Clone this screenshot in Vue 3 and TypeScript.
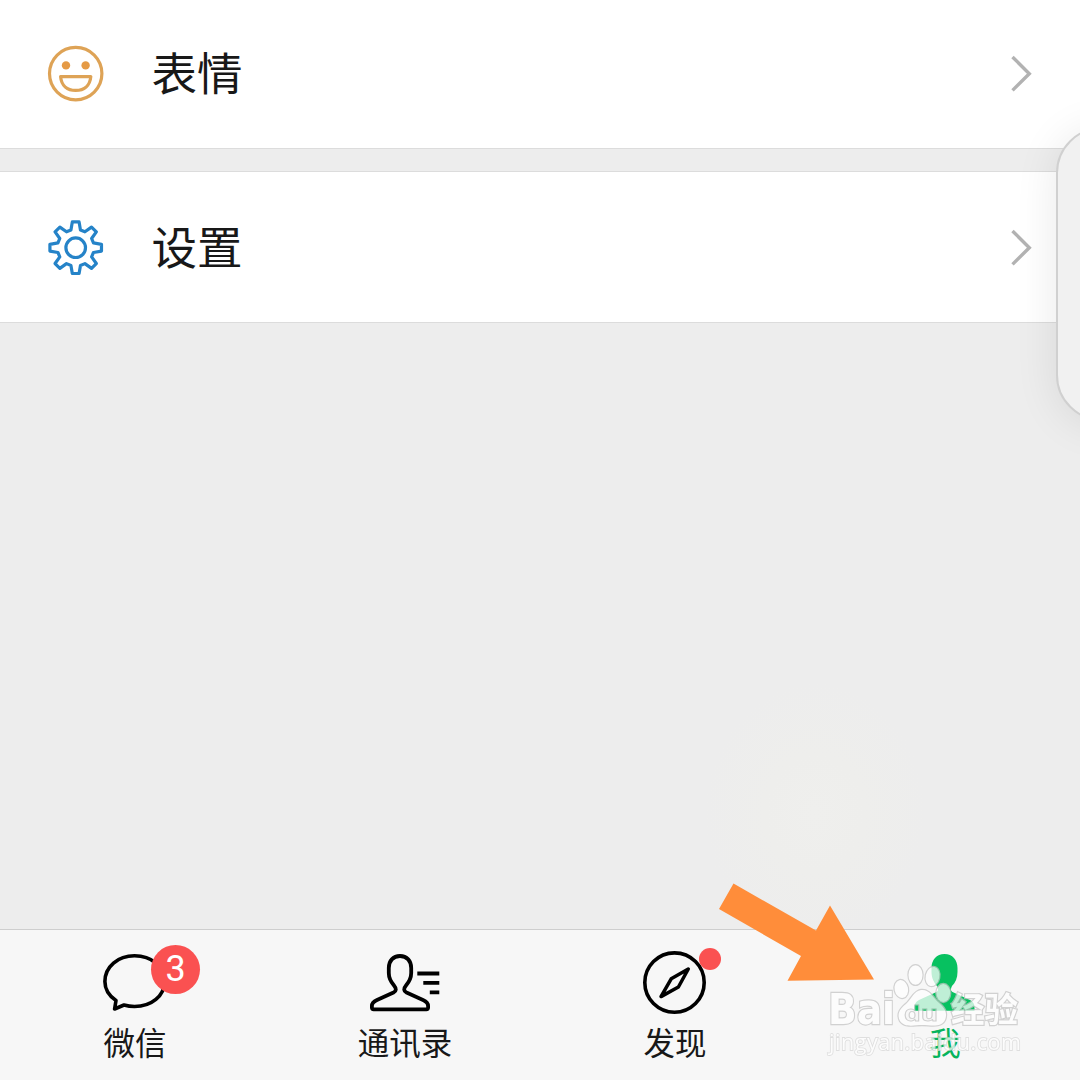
<script setup lang="ts">
interface MenuRow {
  id: 'sticker' | 'settings'
  label: string
}

interface Tab {
  id: 'chats' | 'contacts' | 'discover' | 'me'
  label: string
  active?: boolean
}

const rows: MenuRow[] = [
  { id: 'sticker', label: '表情' },
  { id: 'settings', label: '设置' },
]

const tabs: Tab[] = [
  { id: 'chats', label: '微信' },
  { id: 'contacts', label: '通讯录' },
  { id: 'discover', label: '发现' },
  { id: 'me', label: '我', active: true },
]

// Eight-toothed gear outline: each tooth is base, tip, tip, base.
function gearPath(teeth: number, outer: number, inner: number): string {
  const step = 360 / teeth
  const points: string[] = []
  for (let i = 0; i < teeth; i++) {
    const corners: [number, number][] = [
      [-15, inner],
      [-7.5, outer],
      [7.5, outer],
      [15, inner],
    ]
    for (const [offset, radius] of corners) {
      const a = ((i * step + offset - 90) * Math.PI) / 180
      points.push(`${(30 + radius * Math.cos(a)).toFixed(2)} ${(30 + radius * Math.sin(a)).toFixed(2)}`)
    }
  }
  return `M${points.join('L')}Z`
}

const gear = gearPath(8, 26, 18.4)
</script>

<template>
  <main class="screen">
    <section class="menu">
      <div v-for="row in rows" :key="row.id" class="row" :class="row.id">
        <svg v-if="row.id === 'sticker'" class="row-icon" viewBox="0 0 60 60" fill="none" stroke="#dea356" stroke-width="3.2">
          <circle cx="29.7" cy="29.6" r="26.2" />
          <circle cx="20" cy="21.4" r="4.2" fill="#e59a45" stroke="none" />
          <circle cx="39.6" cy="21.4" r="4.2" fill="#e59a45" stroke="none" />
          <path d="M14.6 32.600H44.800C44 41.800 38 46.400 29.700 46.400S15.400 41.800 14.600 32.600Z" stroke-linejoin="round" />
        </svg>
        <svg v-else class="row-icon" viewBox="0.3 -0.7 60 60" fill="none" stroke="#2583c8" stroke-width="3.2" stroke-linejoin="round">
          <path :d="gear" />
          <circle cx="30" cy="30" r="9.800" />
        </svg>
        <span class="row-label">{{ row.label }}</span>
        <svg class="chevron" viewBox="0 0 24 40" fill="none" stroke="#b2b2b2" stroke-width="3.4">
          <path d="M2.500 3L19.300 19.700L2.500 36.400" />
        </svg>
      </div>
    </section>

    <div class="blank"></div>

    <nav class="tabbar">
      <div v-for="tab in tabs" :key="tab.id" class="tab" :class="{ active: tab.active }">
        <div class="tab-icon">
          <svg v-if="tab.id === 'chats'" viewBox="75 940 120 76" fill="none" stroke="#000" stroke-width="3.6">
            <path d="M116 1000.500C108.500 995.500 104.900 989 104.900 981.500C104.900 966.500 118 955.800 134.500 955.800C151.500 955.800 164.500 966.500 164.500 981.500C164.500 996 151.500 1006.500 134.500 1006.500C130.800 1006.500 127.500 1006 124 1005L114.600 1009Z" stroke-linejoin="round" />
          </svg>
          <svg v-else-if="tab.id === 'contacts'" viewBox="345 940 120 76" fill="none" stroke="#000" stroke-width="3.800">
            <path d="M400 956C393 956 388.800 961 388.800 968V973C388.800 979 391 982 394 985.500C396.500 988.500 396.500 991 393.500 992.500L377 1000C373.500 1001.500 371.900 1003.500 371.900 1006V1007.500Q371.900 1009.300 373.700 1009.300H426.300Q428.100 1009.300 428.100 1007.500V1006C428.100 1003.500 426.500 1001.500 423 1000L406.500 992.500C403.500 991 403.500 988.500 406 985.500C409 982 411.200 979 411.200 973V968C411.200 961 407 956 400 956Z" stroke-linejoin="round" />
            <path d="M417.300 973.500H439.300M423.300 982.800H439.300M429.800 992.300H439.300" />
          </svg>
          <svg v-else-if="tab.id === 'discover'" viewBox="615 940 120 76" fill="none" stroke="#000" stroke-width="3.600">
            <circle cx="674.500" cy="982.600" r="29.700" />
            <path d="M688.300 969L671.200 978.800L661 996.600L678.400 987Z" stroke-width="3.500" stroke-linejoin="round" />
          </svg>
          <svg v-else viewBox="885 940 120 76" fill="#07c160">
            <path d="M944.500 954C936.500 954 931.500 960 931.500 968V972C931.500 978 934 982.500 937 986C938.500 989 938.500 991 936.500 992L919 1000C915.500 1002 914.500 1004 914.500 1007V1010.700H974.500V1007C974.500 1004 973.500 1002 970 1000L952.500 992C950.500 991 950.500 989 952 986C955.500 982.500 957.500 978 957.500 972V968C957.500 960 952.500 954 944.500 954Z" />
          </svg>
          <span v-if="tab.id === 'chats'" class="badge">3</span>
          <span v-if="tab.id === 'discover'" class="dot"></span>
        </div>
        <span class="tab-label">{{ tab.label }}</span>
      </div>
    </nav>

    <aside class="edge-panel"></aside>

    <svg class="pointer" viewBox="0 0 160 104">
      <path d="M15.500 1.500L98 48.500L112 23.500L156 97.500L69.500 98.700L83 74L1 27Z" fill="#ff8d3a" />
    </svg>

    <svg class="watermark" viewBox="820 955 210 110">
      <mask id="pad-cut" maskUnits="userSpaceOnUse" x="890" y="980" width="65" height="55">
        <rect x="890" y="980" width="65" height="55" fill="#fff" />
        <text x="904" y="1020.500" class="du" fill="#000" textLength="34" lengthAdjust="spacingAndGlyphs">du</text>
      </mask>
      <g class="mark">
        <text x="828" y="1024" class="bai" textLength="67" lengthAdjust="spacingAndGlyphs">Bai</text>
        <ellipse cx="901.300" cy="989" rx="6.700" ry="9" transform="rotate(-12 901.300 989)" />
        <ellipse cx="915.500" cy="975" rx="7" ry="9.800" />
        <ellipse cx="932.500" cy="976.500" rx="6.800" ry="9.600" transform="rotate(12 932.500 976.500)" />
        <ellipse cx="943.300" cy="993" rx="6.900" ry="9" />
        <path mask="url(#pad-cut)" d="M921 990C929 989 933 997 938 1002C944 1007 948 1012 945 1020C941 1028 931 1025 922 1025C914 1025 905 1028 900 1021C896 1013 901 1008 907 1003C912 998 914 991 921 990Z" />
        <text x="904" y="1020.500" class="du du-edge" textLength="34" lengthAdjust="spacingAndGlyphs">du</text>
        <text x="951" y="1021.500" class="cjk" textLength="67" lengthAdjust="spacingAndGlyphs">经验</text>
        <text x="829" y="1050" class="url" textLength="192" lengthAdjust="spacing">jingyan.baidu.com</text>
      </g>
    </svg>
  </main>
</template>

<style>
body {
  background: #ededed;
}
</style>

<style scoped>
.screen {
  position: relative;
  display: flex;
  flex-direction: column;
  width: 1080px;
  height: 1080px;
  overflow: hidden;
  background: #ededed;
  color: #181818;
  font-family: "Noto Sans CJK SC", sans-serif;
}

.menu {
  display: flex;
  flex-direction: column;
  gap: 22px;
}

.row {
  box-sizing: border-box;
  display: flex;
  align-items: center;
  height: 149px;
  padding: 0 46px;
  background: #fff;
  border-bottom: 1px solid #dcdcdc;
}

.row.settings {
  height: 152px;
  border-top: 1px solid #dcdcdc;
}

.row-icon {
  width: 60px;
  height: 60px;
}

.row-label {
  flex: 1;
  margin-left: 45.5px;
  padding-bottom: 6px;
  font-size: 45.5px;
  line-height: 60px;
}

.settings .row-label {
  padding-bottom: 4px;
}

.chevron {
  width: 24px;
  height: 40px;
}

.settings .chevron {
  margin-top: 1px;
}

.blank {
  flex: 1;
  background: radial-gradient(ellipse 110px 130px at 815px 490px, #efefed 0%, #eeeeec 45%, #ededed 100%);
}

.tabbar {
  display: grid;
  grid-template-columns: repeat(4, 1fr);
  height: 150px;
  border-top: 1px solid #cecece;
  background: #f7f7f7;
}

.tab {
  display: flex;
  flex-direction: column;
  align-items: center;
  padding-top: 10px;
}

.tab-icon {
  position: relative;
  width: 120px;
  height: 76px;
}

.tab-icon svg {
  display: block;
  width: 120px;
  height: 76px;
}

.tab-label {
  margin-top: 5px;
  font-size: 31.5px;
  line-height: 40px;
}

.tab.active .tab-label {
  color: #07b45c;
}

.badge {
  position: absolute;
  top: 5px;
  left: 76px;
  width: 49px;
  height: 49px;
  border-radius: 50%;
  background: #fa5151;
  color: #fff;
  font-family: Roboto, sans-serif;
  font-size: 36px;
  line-height: 49px;
  text-align: center;
}

.dot {
  position: absolute;
  top: 8px;
  left: 84px;
  width: 22px;
  height: 22px;
  border-radius: 50%;
  background: #fa5151;
}

.edge-panel {
  position: absolute;
  top: 127px;
  left: 1056px;
  box-sizing: border-box;
  width: 120px;
  height: 294px;
  border: 2px solid #d0d0d0;
  border-radius: 46px;
  background: #f1f1f1;
  box-shadow: 0 4px 44px rgba(0, 0, 0, 0.09);
}

.pointer {
  position: absolute;
  top: 882px;
  left: 718px;
  width: 160px;
  height: 104px;
}

.watermark {
  position: absolute;
  top: 955px;
  left: 820px;
  width: 210px;
  height: 110px;
}

.mark {
  fill: #fff;
  stroke: #c4c4c4;
  stroke-width: 2.4px;
  paint-order: stroke;
  opacity: 0.74;
}

.bai {
  font: 700 42px "DejaVu Sans", sans-serif;
}

.du {
  font: 700 22px "Open Sans", sans-serif;
}

.du-edge {
  fill: none;
  stroke-width: 1px;
}

.cjk {
  font: 700 34px "Noto Sans CJK SC", sans-serif;
}

.url {
  font: 400 21.5px "Open Sans", sans-serif;
  stroke: #d8d8d8;
  stroke-width: 1.8px;
}
</style>
